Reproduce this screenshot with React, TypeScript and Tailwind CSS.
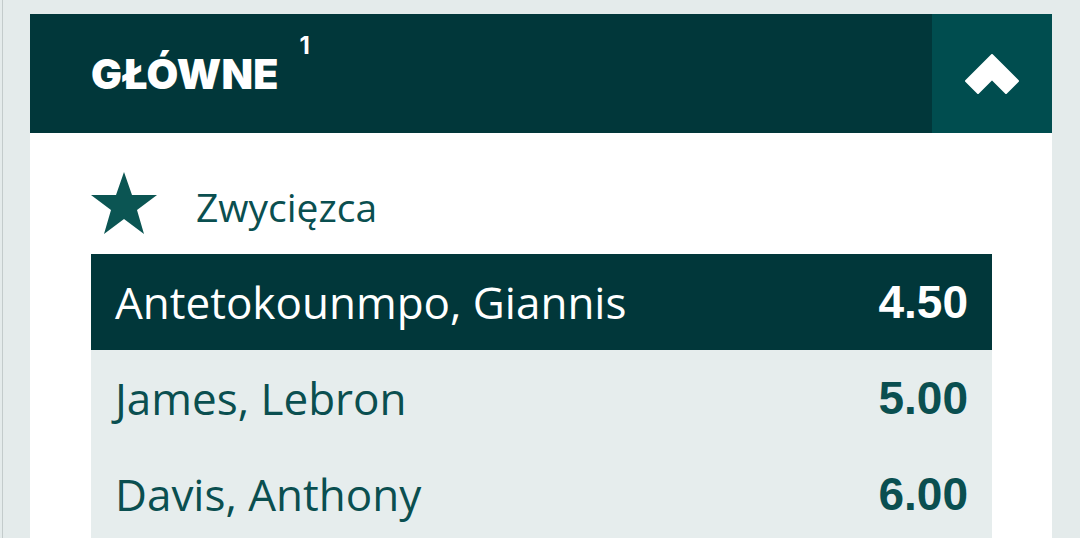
import React from "react";

const ROWS = [
  { name: "Antetokounmpo, Giannis", odds: "4.50", active: true },
  { name: "James, Lebron", odds: "5.00", active: false },
  { name: "Davis, Anthony", odds: "6.00", active: false },
];

function Star() {
  return (
    <svg width="66" height="62" viewBox="0 0 66 62" className="shrink-0">
      <polygon
        points="33,0 41,23 66,23 46,38 53,62 33,47 13,62 20,38 0,23 25,23"
        fill="#0b5553"
      />
    </svg>
  );
}

function ChevronUp() {
  return (
    <svg width="54" height="40" viewBox="-1 -1 54 40">
      <polygon
        points="26,0 52,26 40,38 26,24 12,38 0,26"
        fill="#ffffff"
        stroke="#ffffff"
        strokeWidth="2"
        strokeLinejoin="round"
      />
    </svg>
  );
}

export default function App() {
  return (
    <div className="flex h-[538px] w-[1080px] overflow-hidden bg-[#e4ebeb]">
      <div className="ml-[2px] w-px shrink-0 self-stretch bg-[#c3cbcb]" />
      <div className="ml-[27px] mr-[28px] flex-1 pt-[14px]">
        <div className="flex h-[119px]">
          <div className="flex flex-1 items-center bg-[#01373a] pl-[61px]">
            <div className="relative pt-[2px]">
              <span className="font-['Inter',sans-serif] text-[41px] font-black leading-none tracking-[0.3px] text-white">
                GŁÓWNE
              </span>
              <span className="absolute -top-[18px] -right-[31px] font-['Inter',sans-serif] text-[24px] font-bold leading-none text-white">
                1
              </span>
            </div>
          </div>
          <button
            type="button"
            className="flex w-[120px] items-center justify-center bg-[#004d4f]"
          >
            <ChevronUp />
          </button>
        </div>

        <div className="bg-white pl-[61px] pr-[60px]">
          <div className="mb-[20px] flex h-[101px] items-center gap-[39px] pt-[39px]">
            <Star />
            <span className="pt-[6px] font-['Open_Sans',sans-serif] text-[39px] leading-none text-[#0a4f50]">
              Zwycięzca
            </span>
          </div>

          <div className="flex flex-col">
            {ROWS.map((row) => (
              <div
                key={row.name}
                className={`flex h-[96px] items-center justify-between px-[24px] ${
                  row.active ? "bg-[#01373a] text-white" : "bg-[#e6eded] text-[#0a4f50]"
                }`}
              >
                <span className="font-['Open_Sans',sans-serif] text-[44px] leading-none">
                  {row.name}
                </span>
                <span className="font-['Liberation_Sans',sans-serif] text-[46px] font-bold leading-none">
                  {row.odds}
                </span>
              </div>
            ))}
          </div>
        </div>
      </div>
    </div>
  );
}
